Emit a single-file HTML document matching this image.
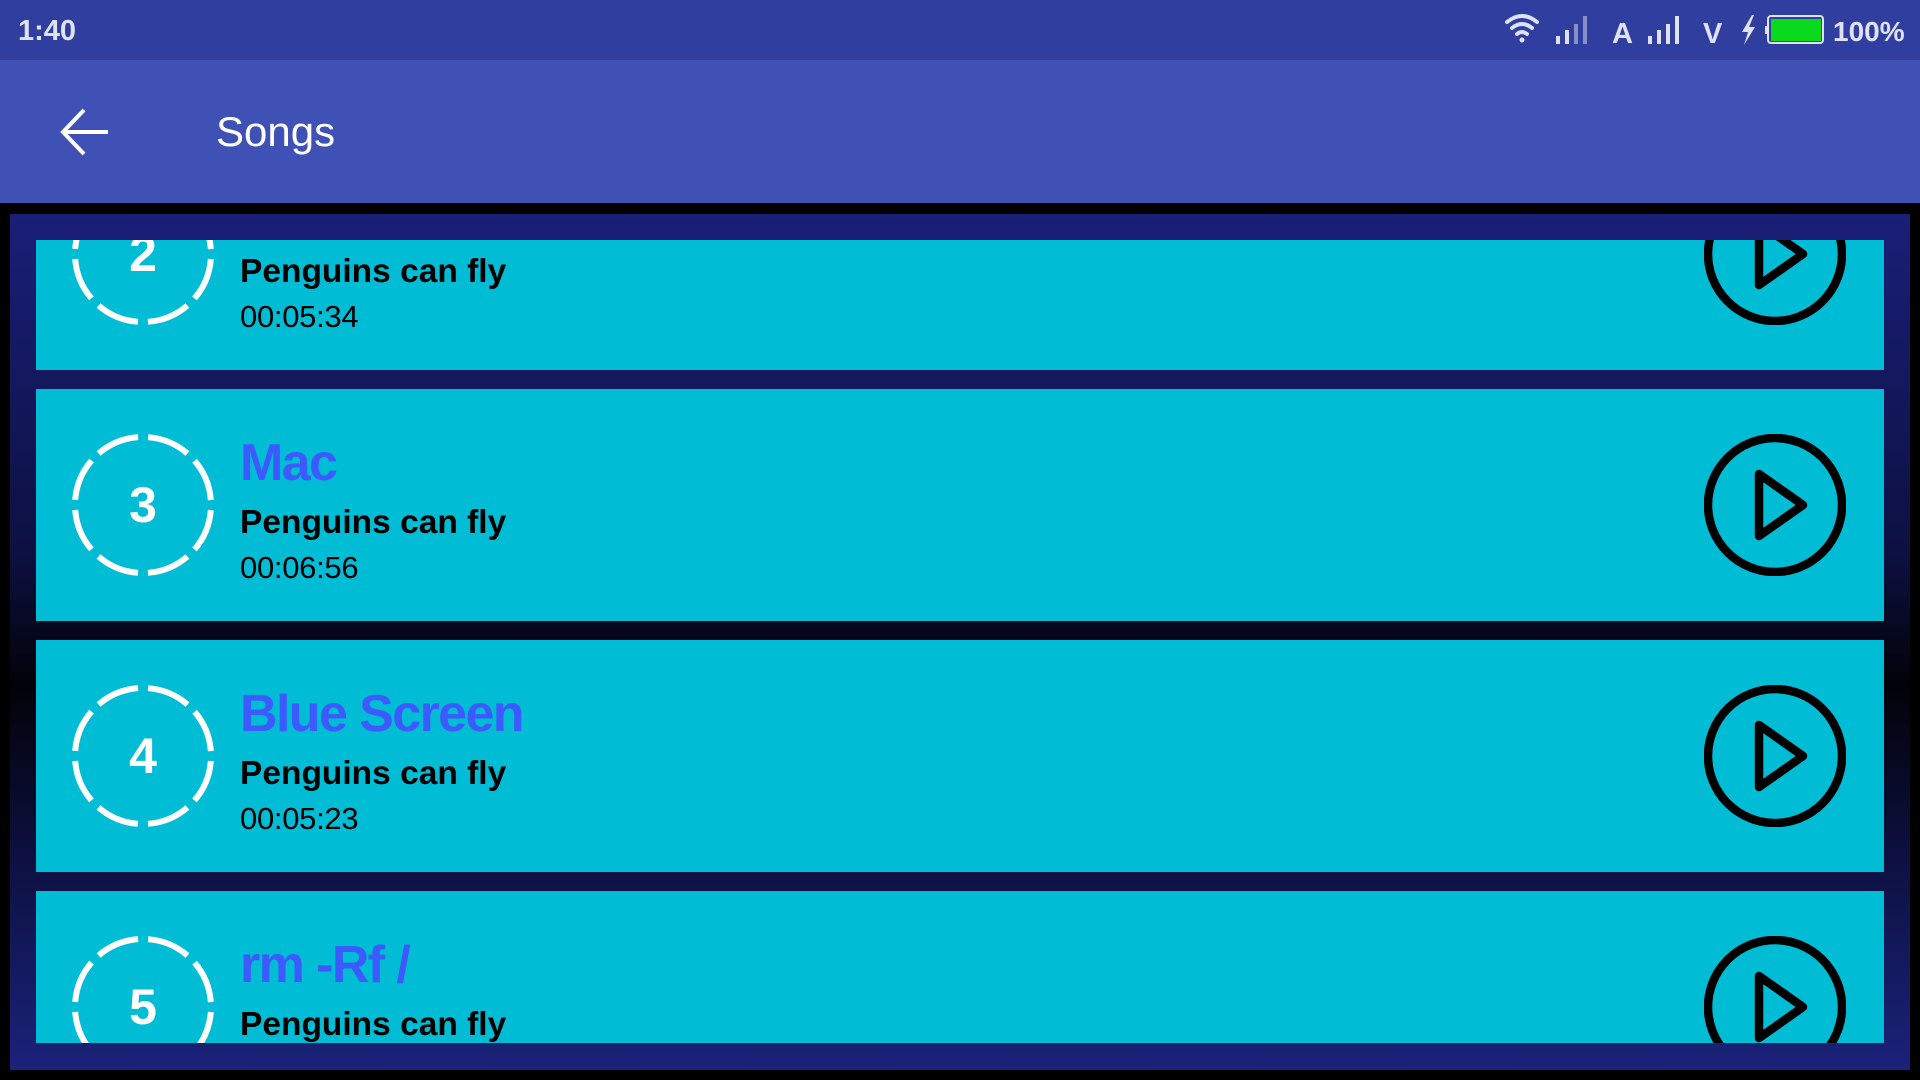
<!DOCTYPE html>
<html><head><meta charset="utf-8"><style>
*{margin:0;padding:0;box-sizing:border-box}
body{width:1920px;height:1080px;background:#000;position:relative;overflow:hidden;font-family:"Liberation Sans",sans-serif}
.status{position:absolute;left:0;top:0;width:1920px;height:60px;background:#303F9F}
.tool{position:absolute;left:0;top:60px;width:1920px;height:143px;background:#3F51B5}
.cont{position:absolute;left:10px;top:214px;width:1900px;height:856px;background:linear-gradient(#1a1f78 0%,#0d1040 40%,#020208 55%,#0d1040 75%,#1a237a 100%)}
.clip{position:absolute;left:36px;top:240px;width:1848px;height:803px;overflow:hidden}
.card{position:absolute;left:0;width:1848px;height:232px;background:#00BCD4}
.t{position:absolute;white-space:nowrap}
.ti{left:204px;top:44px;font-size:52px;font-weight:bold;color:#3D5AFE;letter-spacing:-1.6px}
.pc{left:204px;top:115px;font-size:33.5px;font-weight:bold;color:#000}
.tm{left:204px;top:161px;font-size:31px;color:#000;letter-spacing:-0.3px}
</style></head><body>
<div class="status">
<div class="t" style="left:18px;top:15px;font-size:29px;font-weight:bold;color:#dfe2f5">1:40</div>
<svg style="position:absolute;left:1450px;top:0" width="470" height="60">
<g fill="none" stroke="#dfe2f5" stroke-width="4" stroke-linecap="round">
<path d="M57 22 Q72 10 87 22"/><path d="M62 28 Q72 20 82 28"/><path d="M67 34 Q72 30 77 34"/></g>
<circle cx="72" cy="40" r="2.5" fill="#dfe2f5"/>
<g fill="#dfe2f5"><rect x="106" y="36" width="4" height="8"/><rect x="115" y="30" width="4" height="14"/>
<rect x="124" y="24" width="4" height="20" opacity=".5"/><rect x="133" y="16" width="4" height="28" opacity=".5"/>
<rect x="198" y="36" width="4" height="8"/><rect x="207" y="30" width="4" height="14"/><rect x="216" y="24" width="4" height="20"/><rect x="225" y="16" width="4" height="28"/>
<path d="M302 15 L292 32 L298 32 L294 45 L305 27 L299 27 L304 15Z"/></g>
<text x="162" y="43" font-size="29" font-weight="bold" fill="#dfe2f5" font-family="Liberation Sans">A</text>
<text x="253" y="43" font-size="29" font-weight="bold" fill="#dfe2f5" font-family="Liberation Sans">V</text>
<rect x="318" y="16" width="55" height="27" rx="3" fill="none" stroke="#dfe2f5" stroke-width="2"/>
<rect x="321" y="19" width="50" height="22" fill="#0ada1e"/>
<rect x="315" y="26" width="3" height="8" fill="#dfe2f5"/>
<text x="383" y="41" font-size="28" font-weight="bold" fill="#dfe2f5" font-family="Liberation Sans">100%</text>
</svg>
</div>
<div class="tool">
<svg style="position:absolute;left:58px;top:45px" width="56" height="56"><path d="M5 27 H50 M26 5 L5 27 L26 49" fill="none" stroke="#fff" stroke-width="4"/></svg>
<div class="t" style="left:216px;top:48px;font-size:42px;color:#fff">Songs</div>
</div>
<div class="cont"></div>
<div class="clip">
<div class="card" style="top:-102px">
<svg style="position:absolute;left:36px;top:45px" width="142" height="142"><circle cx="71" cy="71" r="68" fill="none" stroke="#fff" stroke-width="6" stroke-dasharray="43.4 10" stroke-dashoffset="-5"/><text x="71" y="88" text-anchor="middle" font-size="50" font-weight="bold" fill="#fff" font-family="Liberation Sans">2</text></svg>
<svg style="position:absolute;left:1668px;top:45px" width="142" height="142"><circle cx="71" cy="71" r="67" fill="none" stroke="#000" stroke-width="8.5"/><path d="M55 40 L99 71 L55 102Z" fill="none" stroke="#000" stroke-width="8.5" stroke-linejoin="round"/></svg>
<div class="t ti">Android</div>
<div class="t pc">Penguins can fly</div>
<div class="t tm">00:05:34</div>
</div>
<div class="card" style="top:149px">
<svg style="position:absolute;left:36px;top:45px" width="142" height="142"><circle cx="71" cy="71" r="68" fill="none" stroke="#fff" stroke-width="6" stroke-dasharray="43.4 10" stroke-dashoffset="-5"/><text x="71" y="88" text-anchor="middle" font-size="50" font-weight="bold" fill="#fff" font-family="Liberation Sans">3</text></svg>
<svg style="position:absolute;left:1668px;top:45px" width="142" height="142"><circle cx="71" cy="71" r="67" fill="none" stroke="#000" stroke-width="8.5"/><path d="M55 40 L99 71 L55 102Z" fill="none" stroke="#000" stroke-width="8.5" stroke-linejoin="round"/></svg>
<div class="t ti">Mac</div>
<div class="t pc">Penguins can fly</div>
<div class="t tm">00:06:56</div>
</div>
<div class="card" style="top:400px">
<svg style="position:absolute;left:36px;top:45px" width="142" height="142"><circle cx="71" cy="71" r="68" fill="none" stroke="#fff" stroke-width="6" stroke-dasharray="43.4 10" stroke-dashoffset="-5"/><text x="71" y="88" text-anchor="middle" font-size="50" font-weight="bold" fill="#fff" font-family="Liberation Sans">4</text></svg>
<svg style="position:absolute;left:1668px;top:45px" width="142" height="142"><circle cx="71" cy="71" r="67" fill="none" stroke="#000" stroke-width="8.5"/><path d="M55 40 L99 71 L55 102Z" fill="none" stroke="#000" stroke-width="8.5" stroke-linejoin="round"/></svg>
<div class="t ti">Blue Screen</div>
<div class="t pc">Penguins can fly</div>
<div class="t tm">00:05:23</div>
</div>
<div class="card" style="top:651px">
<svg style="position:absolute;left:36px;top:45px" width="142" height="142"><circle cx="71" cy="71" r="68" fill="none" stroke="#fff" stroke-width="6" stroke-dasharray="43.4 10" stroke-dashoffset="-5"/><text x="71" y="88" text-anchor="middle" font-size="50" font-weight="bold" fill="#fff" font-family="Liberation Sans">5</text></svg>
<svg style="position:absolute;left:1668px;top:45px" width="142" height="142"><circle cx="71" cy="71" r="67" fill="none" stroke="#000" stroke-width="8.5"/><path d="M55 40 L99 71 L55 102Z" fill="none" stroke="#000" stroke-width="8.5" stroke-linejoin="round"/></svg>
<div class="t ti">rm -Rf /</div>
<div class="t pc">Penguins can fly</div>
<div class="t tm">00:04:12</div>
</div>
</div>
</body></html>
